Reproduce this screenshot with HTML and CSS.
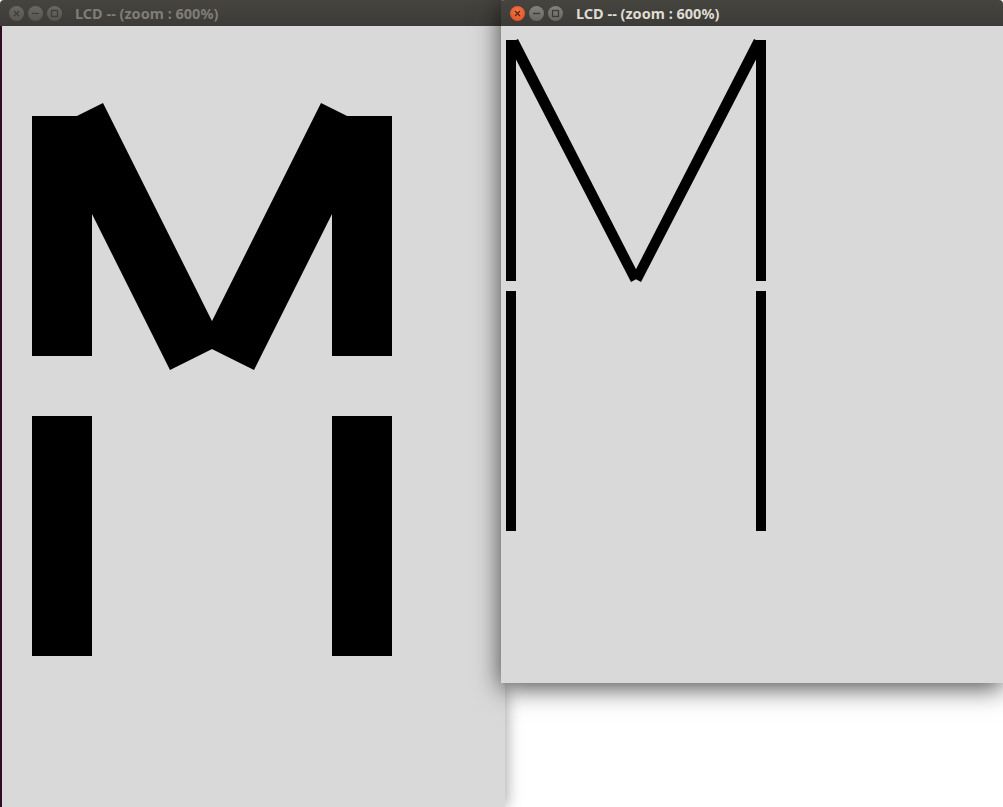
FILE: index.html
```html
<!DOCTYPE html>
<html>
<head>
<meta charset="utf-8">
<link rel="stylesheet" href="styles.css">
</head>
<body>
<div class="desktop">
  <div class="window win-back">
    <div class="titlebar">
      <div class="buttons">
        <span class="btn"><svg viewBox="0 0 15 15"><path d="M5 5 L10 10 M10 5 L5 10" /></svg></span>
        <span class="btn"><svg viewBox="0 0 15 15"><path d="M4 7.5 H11" /></svg></span>
        <span class="btn"><svg viewBox="0 0 15 15"><rect x="4.5" y="4.5" width="6" height="6" /></svg></span>
      </div>
      <span class="title">LCD -- (zoom : 600%)</span>
    </div>
    <div class="content">
      <svg class="glyph glyph-big" width="501" height="781" viewBox="0 0 501 781">
        <rect x="30" y="90" width="60" height="240" />
        <rect x="330" y="90" width="60" height="240" />
        <rect x="30" y="390" width="60" height="240" />
        <rect x="330" y="390" width="60" height="240" />
        <polygon points="101,77 47.8,103.6 168,344 221.2,317.4" />
        <polygon points="319,77 372.2,103.6 252,344 198.8,317.4" />
      </svg>
    </div>
  </div>
  <div class="window win-front">
    <div class="titlebar">
      <div class="buttons">
        <span class="btn close"><svg viewBox="0 0 15 15"><path d="M5 5 L10 10 M10 5 L5 10" /></svg></span>
        <span class="btn"><svg viewBox="0 0 15 15"><path d="M4 7.5 H11" /></svg></span>
        <span class="btn"><svg viewBox="0 0 15 15"><rect x="4.5" y="4.5" width="6" height="6" /></svg></span>
      </div>
      <span class="title">LCD -- (zoom : 600%)</span>
    </div>
    <div class="content">
      <svg class="glyph" width="502" height="657" viewBox="0 0 502 657">
        <rect x="5" y="14" width="10" height="241" />
        <rect x="255" y="14" width="10" height="241" />
        <rect x="5" y="265" width="10" height="240" />
        <rect x="255" y="265" width="10" height="240" />
        <polygon points="7,18 17,13 139,251 130,256" />
        <polygon points="263,18 253,13 131,251 140,256" />
      </svg>
    </div>
  </div>
</div>
</body>
</html>
```

FILE: styles.css
```css
html, body {
  margin: 0;
  padding: 0;
  background: #ffffff;
}

.desktop {
  position: relative;
  width: 1003px;
  height: 807px;
  overflow: hidden;
  background: #ffffff;
}

.window {
  position: absolute;
  top: 0;
  display: flex;
  flex-direction: column;
}

.win-back {
  left: 0;
  width: 505px;
  height: 807px;
  box-shadow: 2px 0 14px rgba(0, 0, 0, 0.35);
}

.win-front {
  left: 501px;
  width: 502px;
  height: 683px;
  box-shadow: 0 5px 24px rgba(0, 0, 0, 0.7);
}

.titlebar {
  height: 26px;
  flex: 0 0 26px;
  display: flex;
  align-items: center;
  background: linear-gradient(#45443f, #3c3b37);
  border-radius: 4px 4px 0 0;
  font-family: "Noto Sans", "DejaVu Sans", sans-serif;
  font-weight: bold;
  font-size: 14.5px;
}

.buttons {
  display: flex;
  gap: 4px;
  padding-left: 9px;
}

.btn {
  width: 15px;
  height: 15px;
  border-radius: 50%;
  background: linear-gradient(#85837d, #67655f);
  display: flex;
}

.btn svg {
  width: 15px;
  height: 15px;
  fill: none;
  stroke: #3c3b37;
  stroke-width: 1.3;
}

.win-back .btn {
  background: linear-gradient(#6a6863, #57554f);
}

.win-back .btn svg {
  stroke: #3f3d39;
}

.btn.close {
  background: radial-gradient(circle at 50% 40%, #f37a4f, #dd4814);
}

.btn.close svg {
  stroke: #5a2210;
}

.title {
  margin-left: 13px;
  color: #dfdbd2;
  white-space: nowrap;
}

.win-back .title {
  color: #807d76;
}

.content {
  flex: 1;
  background: #d9d9d9;
  overflow: hidden;
}

.win-back .content {
  border-left: 2px solid #2f0b25;
}

.glyph {
  display: block;
  fill: #000000;
}
```
